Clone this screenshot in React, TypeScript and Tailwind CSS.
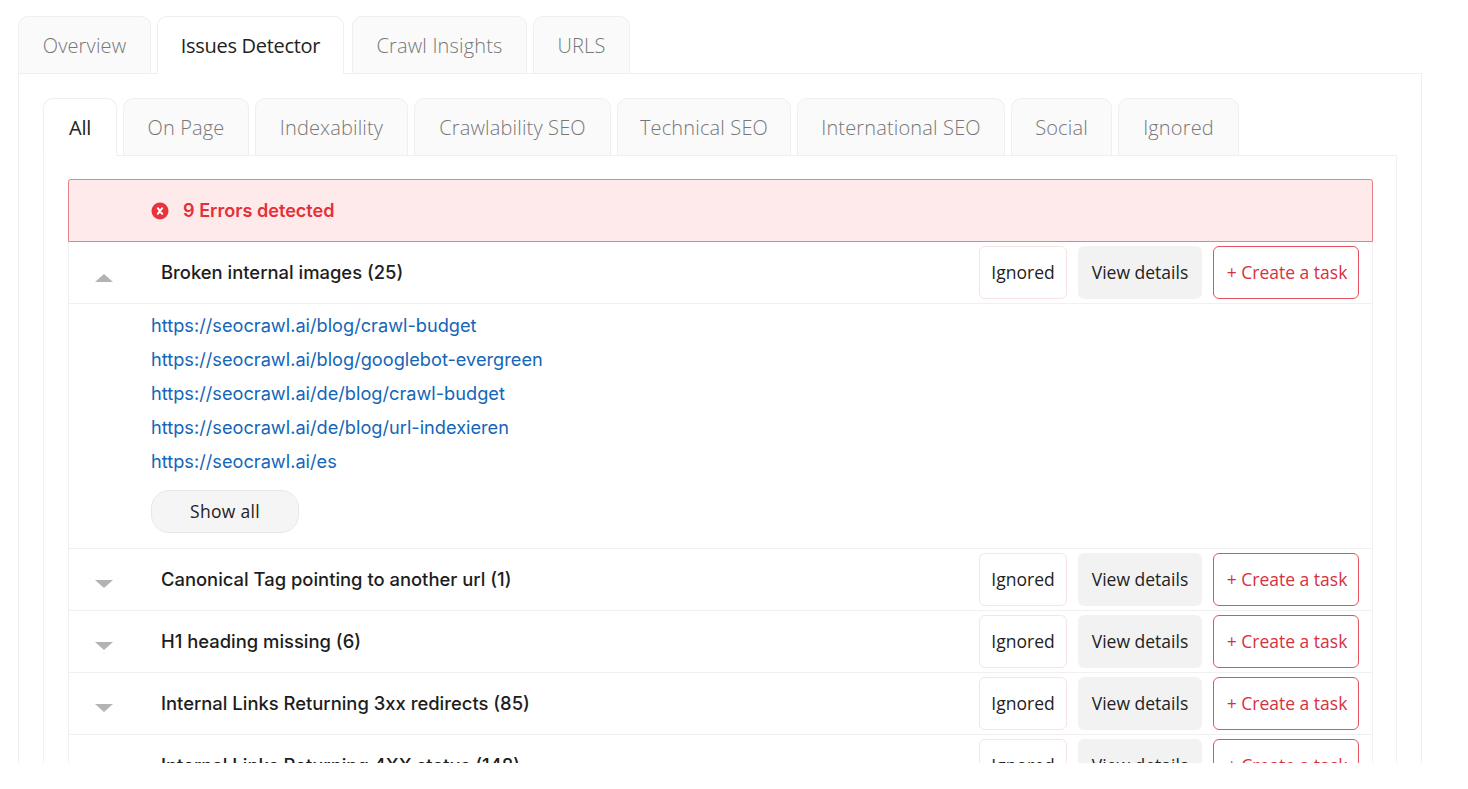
const outerTabs = [
  { label: "Overview", width: "w-[133px]" },
  { label: "Issues Detector", width: "w-[187px]", active: true },
  { label: "Crawl Insights", width: "w-[175px]" },
  { label: "URLS", width: "w-[97px]" },
];

const innerTabs = [
  { label: "All", width: "w-[74px]", active: true },
  { label: "On Page", width: "w-[126px]" },
  { label: "Indexability", width: "w-[153px]" },
  { label: "Crawlability SEO", width: "w-[197px]" },
  { label: "Technical SEO", width: "w-[174px]" },
  { label: "International SEO", width: "w-[208px]" },
  { label: "Social", width: "w-[101px]" },
  { label: "Ignored", width: "w-[121px]" },
];

const links = [
  "https://seocrawl.ai/blog/crawl-budget",
  "https://seocrawl.ai/blog/googlebot-evergreen",
  "https://seocrawl.ai/de/blog/crawl-budget",
  "https://seocrawl.ai/de/blog/url-indexieren",
  "https://seocrawl.ai/es",
];

const collapsedIssues = [
  "Canonical Tag pointing to another url (1)",
  "H1 heading missing (6)",
  "Internal Links Returning 3xx redirects (85)",
  "Internal Links Returning 4XX status (148)",
];

function Tab({ label, width, active, mr }: { label: string; width: string; active?: boolean; mr: string }) {
  return (
    <div
      className={`${width} ${mr} h-[58px] pt-[2px] flex items-center justify-center rounded-t-[10px] border border-[#efefef] text-[20px] font-['Open_Sans',sans-serif] ${
        active
          ? "bg-white border-b-white text-[#222] relative z-10 font-normal tracking-[-0.3px]"
          : "bg-[#fafafa] text-[#777] font-light tracking-[0.15px]"
      }`}
    >
      {label}
    </div>
  );
}

function Arrow({ up }: { up?: boolean }) {
  return (
    <svg width="20" height="9" viewBox="0 0 20 9" className={`ml-[25px] shrink-0 ${up ? "mt-[11px]" : "mt-[9px]"}`}>
      <polygon points={up ? "10,0 19,8 1,8" : "1,0 19,0 10,8"} fill="#b3b3b3" />
    </svg>
  );
}

function IssueRow({ title, up }: { title: string; up?: boolean }) {
  return (
    <div className="h-[62px] flex items-center border-b border-[#f0f0f0] bg-white">
      <Arrow up={up} />
      <span className={`ml-[47px] flex-1 text-[18.4px] font-medium text-[#1d1d1d] font-['Inter',sans-serif] ${up ? "pt-[1px]" : ""}`}>
        {title}
      </span>
      <div className="flex items-center gap-[11px] pr-[13px] font-['Open_Sans',sans-serif] text-[17.5px] leading-[50px]">
        <button className="w-[88px] h-[53px] pb-[2px] rounded-[6px] border border-[#f6e4e6] bg-white text-[#222]">Ignored</button>
        <button className="w-[124px] h-[53px] pb-[2px] rounded-[6px] bg-[#f2f2f2] text-[#222]">View details</button>
        <button className="w-[146px] h-[53px] pb-[2px] pl-[2px] rounded-[6px] border border-[#e4525f] bg-white text-[#d9303e]">+ Create a task</button>
      </div>
    </div>
  );
}

export default function App() {
  return (
    <div className="h-[789px] w-[1468px] bg-white overflow-hidden">
      <div className="h-[763px] overflow-hidden pt-4 pl-[18px]">
        <div className="flex -mb-px">
          {outerTabs.map((tab, i) => (
            <Tab key={tab.label} {...tab} mr={i === 1 ? "mr-[8px]" : "mr-[6px]"} />
          ))}
        </div>
        <div className="w-[1404px] border border-[#f0f0f0] pt-[24px] pl-[24px] h-[700px]">
          <div className="flex -mb-px">
            {innerTabs.map((tab) => (
              <Tab key={tab.label} {...tab} mr="mr-[6px]" />
            ))}
          </div>
          <div className="w-[1354px] border border-[#f0f0f0] pt-[23px] pl-[24px] h-[620px]">
            <div className="w-[1305px] border-x border-[#f0f0f0]">
              <div className="-mx-px h-[63px] flex items-center border border-[#ec8088] rounded-t-[3px] bg-[#feeaeb] pl-[82px]">
                <svg width="18" height="18" viewBox="0 0 18 18" className="shrink-0">
                  <circle cx="9" cy="9" r="8.5" fill="#e8323c" />
                  <path d="M6.8 6.2 L11.2 11.8 M11.2 6.2 L6.8 11.8" stroke="#fff" strokeWidth="2" strokeLinecap="round" />
                </svg>
                <span className="ml-[14px] pt-[1px] text-[18.1px] font-semibold text-[#e5303a] font-['Inter',sans-serif]">9 Errors detected</span>
              </div>
              <IssueRow title="Broken internal images (25)" up />
              <div className="h-[245px] border-b border-[#f0f0f0] pl-[82px] pt-[4px] bg-white">
                <div className="flex flex-col font-['Inter',sans-serif] text-[18.2px] text-[#1565b8]">
                  {links.map((url) => (
                    <a key={url} className="h-[34px] leading-[34px]">
                      {url}
                    </a>
                  ))}
                </div>
                <button className="mt-[12px] w-[148px] h-[43px] rounded-[18px] border border-[#e8e8e8] bg-[#f5f5f5] text-[17.5px] tracking-[0.3px] text-[#222] font-['Open_Sans',sans-serif]">
                  Show all
                </button>
              </div>
              {collapsedIssues.map((title) => (
                <IssueRow key={title} title={title} />
              ))}
            </div>
          </div>
        </div>
      </div>
    </div>
  );
}
